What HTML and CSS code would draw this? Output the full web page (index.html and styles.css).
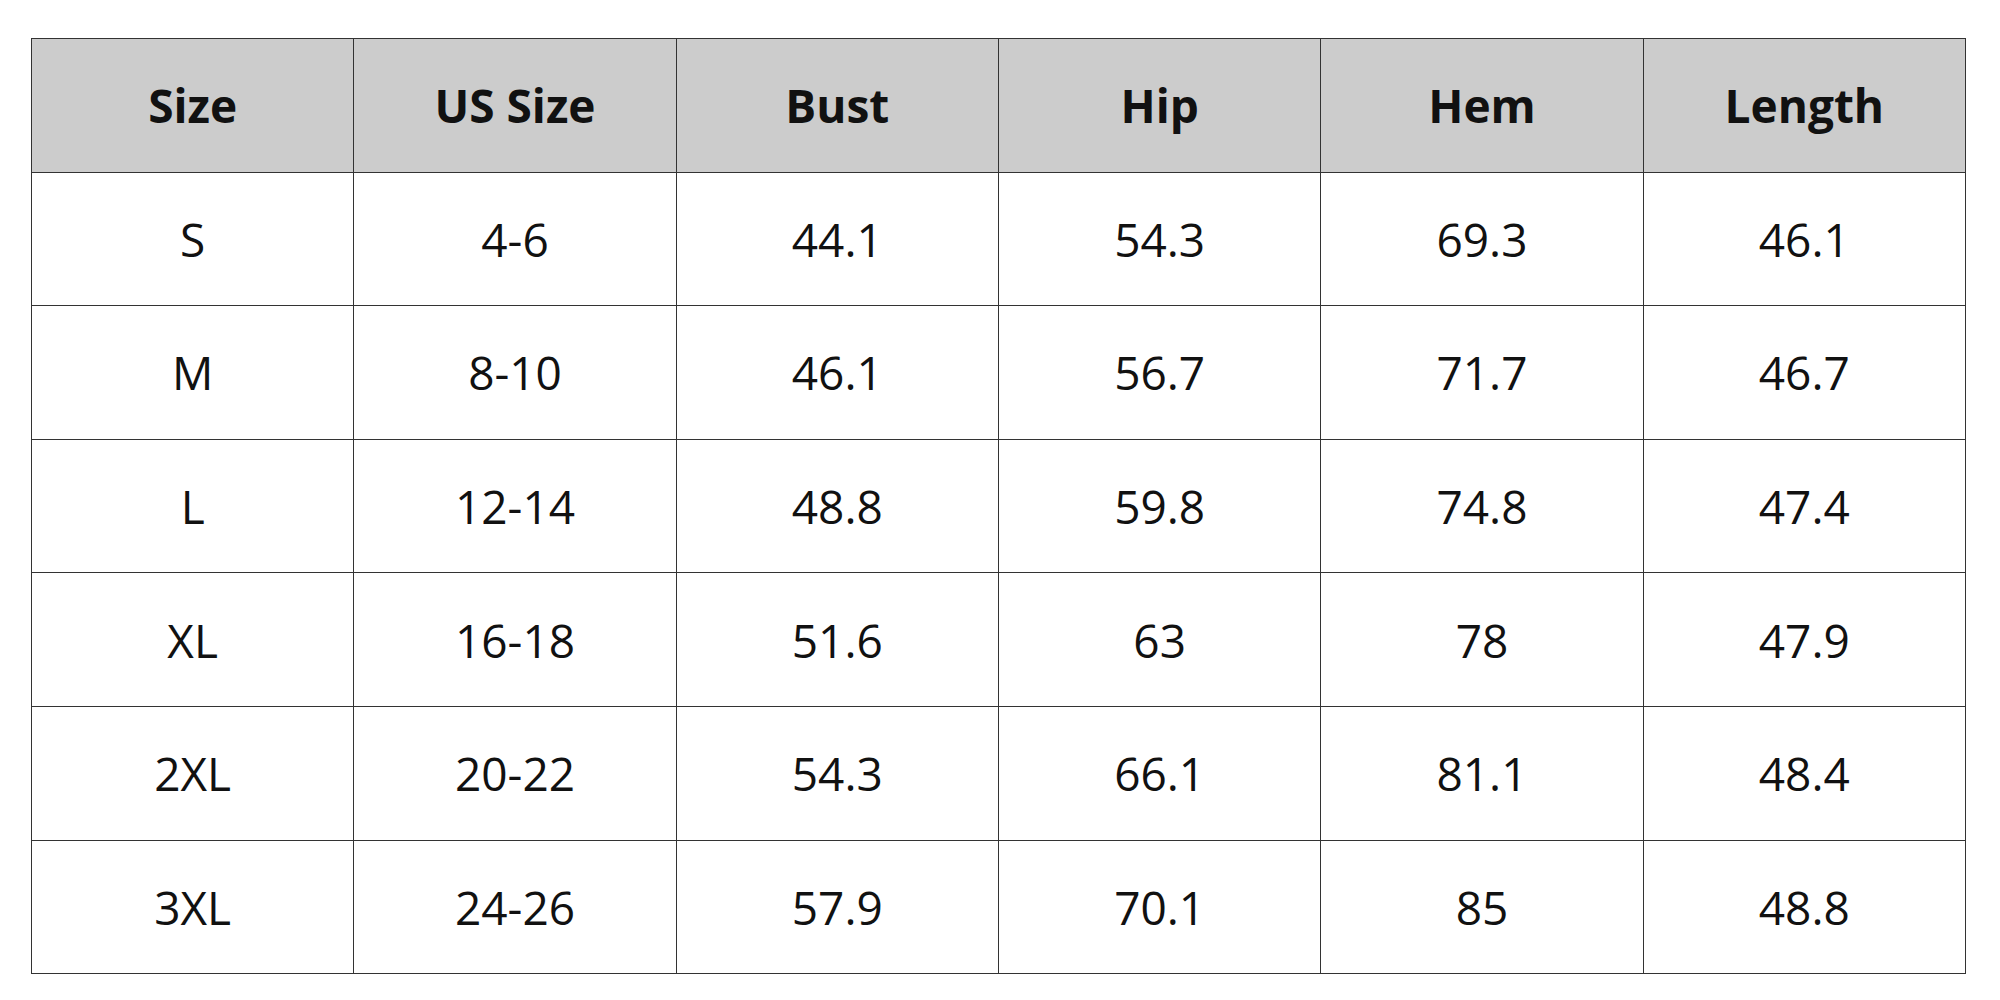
FILE: index.html
```html
<!DOCTYPE html>
<html>
<head>
<meta charset="utf-8">
<link rel="stylesheet" href="styles.css">
</head>
<body>
<table class="size-table">
  <thead>
    <tr><th>Size</th><th>US Size</th><th>Bust</th><th>Hip</th><th>Hem</th><th>Length</th></tr>
  </thead>
  <tbody>
    <tr><td>S</td><td>4-6</td><td>44.1</td><td>54.3</td><td>69.3</td><td>46.1</td></tr>
    <tr><td>M</td><td>8-10</td><td>46.1</td><td>56.7</td><td>71.7</td><td>46.7</td></tr>
    <tr><td>L</td><td>12-14</td><td>48.8</td><td>59.8</td><td>74.8</td><td>47.4</td></tr>
    <tr><td>XL</td><td>16-18</td><td>51.6</td><td>63</td><td>78</td><td>47.9</td></tr>
    <tr><td>2XL</td><td>20-22</td><td>54.3</td><td>66.1</td><td>81.1</td><td>48.4</td></tr>
    <tr><td>3XL</td><td>24-26</td><td>57.9</td><td>70.1</td><td>85</td><td>48.8</td></tr>
  </tbody>
</table>
</body>
</html>
```
FILE: styles.css
```css
html, body {
  margin: 0;
  padding: 0;
  background: #ffffff;
}
body {
  padding: 38px 0 0 31px;
  font-family: "Open Sans", "Noto Sans", sans-serif;
  color: #111111;
}
.size-table {
  border-collapse: collapse;
  width: 1935px;
  table-layout: fixed;
  border: 1px solid #777777;
}
.size-table th,
.size-table td {
  border: 1px solid #333333;
  text-align: center;
  vertical-align: middle;
  height: 132.6px;
  padding: 0;
  font-size: 46px;
  line-height: 1;
}
.size-table th {
  background: #cccccc;
  font-weight: 700;
}
.size-table td {
  font-weight: 400;
}
```
